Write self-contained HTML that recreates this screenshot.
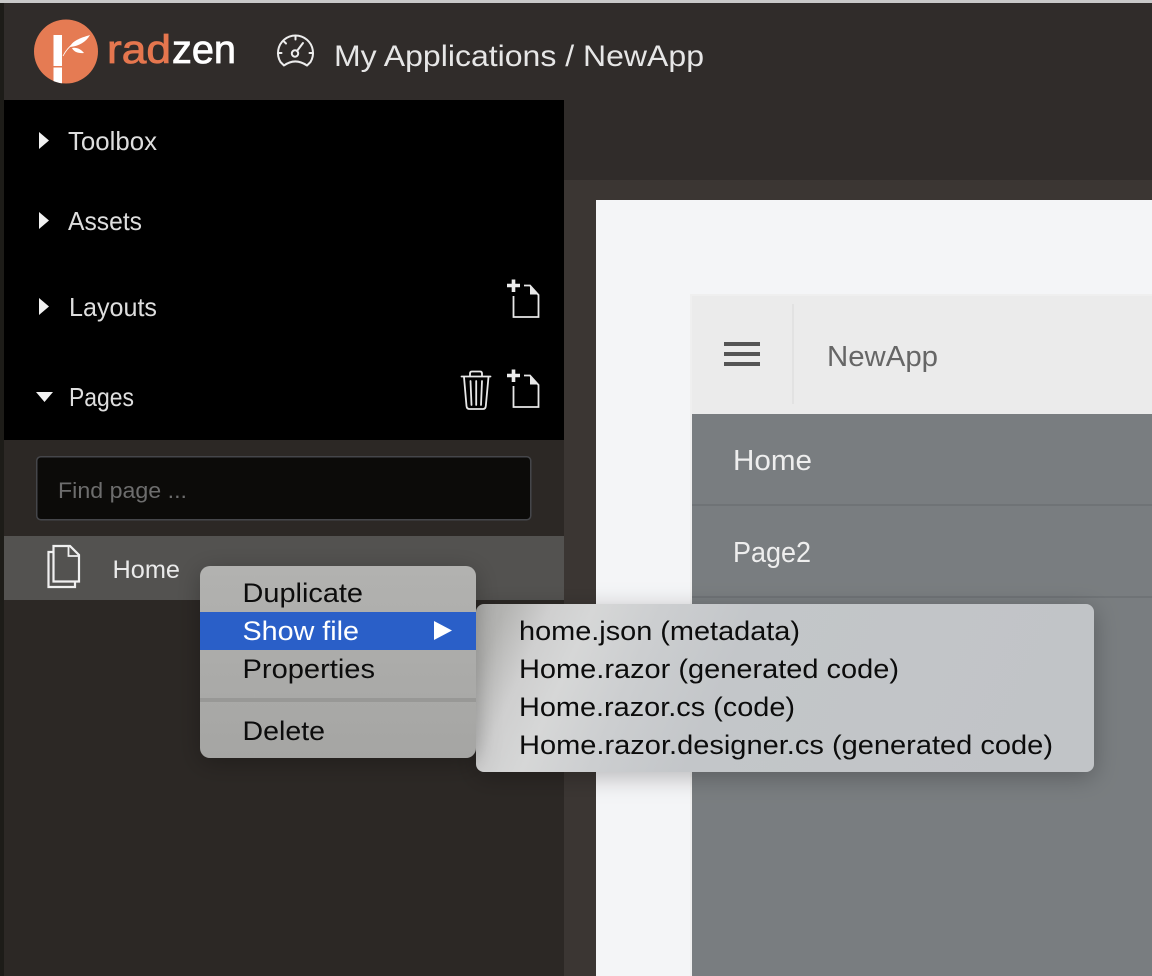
<!DOCTYPE html>
<html lang="en">
<head>
<meta charset="utf-8">
<title>Radzen</title>
<style>
html,body{margin:0;padding:0;background:#302c2a;width:1152px;height:976px;overflow:hidden}
svg{display:block}
text{font-family:"Liberation Sans",sans-serif;white-space:pre}
</style>
</head>
<body>
<svg xmlns="http://www.w3.org/2000/svg" width="1152" height="976" viewBox="0 0 1152 976">
<defs>
<filter id="sh" x="-20%" y="-30%" width="140%" height="170%">
<feDropShadow dx="0" dy="5" stdDeviation="12" flood-color="#000" flood-opacity=".26"/>
</filter>
<linearGradient id="m2" x1="0" y1="0" x2="1" y2="0.12">
<stop offset="0" stop-color="#acacaa"/><stop offset=".05" stop-color="#b4b4b2"/><stop offset=".12" stop-color="#cfcfcf"/><stop offset=".19" stop-color="#d6d7d7"/><stop offset=".3" stop-color="#ccced0"/><stop offset=".45" stop-color="#c3c6c9"/><stop offset="1" stop-color="#c1c4c7"/>
</linearGradient>
<linearGradient id="m1t" x1="0" y1="0" x2="0" y2="1">
<stop offset="0" stop-color="#b2b2b0"/><stop offset="1" stop-color="#a5a5a3"/>
</linearGradient>
<clipPath id="logo"><circle cx="66" cy="51.500" r="32"/></clipPath>
</defs>

<!-- shell -->
<rect width="1152" height="976" fill="#302c2a"/>
<rect width="1152" height="3" fill="#c9c9c9"/>
<rect y="3" width="4" height="973" fill="#1d1c18"/>
<rect x="564" y="180" width="588" height="796" fill="#3b3633"/>
<rect x="596" y="200" width="556" height="776" fill="#f4f5f7"/>

<!-- app preview -->
<rect x="690" y="294" width="462" height="682" fill="#efefef"/>
<rect x="692" y="296" width="460" height="118" fill="#ebebeb"/>
<rect x="792" y="304" width="2" height="100" fill="#e2e2e2"/>
<rect x="724" y="342" width="36" height="4" fill="#555"/>
<rect x="724" y="352" width="36" height="4" fill="#555"/>
<rect x="724" y="362" width="36" height="4" fill="#555"/>
<text x="827" y="366" font-size="29" fill="#666" textLength="111" lengthAdjust="spacingAndGlyphs">NewApp</text>
<rect x="692" y="414" width="460" height="562" fill="#797d80"/>
<rect x="692" y="504" width="460" height="2" fill="#6f7376"/>
<rect x="692" y="596" width="460" height="2" fill="#6f7376"/>
<text x="733" y="470" font-size="29" fill="#eee" textLength="79" lengthAdjust="spacingAndGlyphs">Home</text>
<text x="733" y="562" font-size="29" fill="#eee" textLength="78" lengthAdjust="spacingAndGlyphs">Page2</text>

<!-- header -->
<circle cx="66" cy="51.500" r="32" fill="#e57b53"/>
<g clip-path="url(#logo)" fill="#fff">
<rect x="53.500" y="35" width="8.500" height="31"/>
<rect x="53.500" y="67.500" width="8.500" height="18"/>
</g>
<path d="M63 56 C66 50 70 46 74 43" stroke="#fff" stroke-width=".8" fill="none"/>
<path d="M70 47 C72 41 80 38 90 35 C86 42 79 46 70 47Z" fill="#fff"/>
<path d="M72 48 C76 47 81 49 84 53 C78 53.500 74 52 72 48Z" fill="#fff"/>
<text x="107" y="63" font-size="40" fill="#e5764e" stroke="#e5764e" stroke-width=".8" textLength="64" lengthAdjust="spacingAndGlyphs">rad</text>
<text x="172" y="63" font-size="40" fill="#fff" stroke="#fff" stroke-width=".8" textLength="64" lengthAdjust="spacingAndGlyphs">zen</text>

<g fill="none" stroke="#ededed" stroke-width="2" stroke-linecap="round" stroke-linejoin="round">
<path d="M284 65.500 L280.500 62 A17.500 17.500 0 1 1 310.500 62 L307 65.500 C299 60 291.500 60 284 65.500Z"/>
<circle cx="295" cy="53.500" r="3.200"/>
<path d="M297 51 L303 43"/>
<path d="M295.500 36.500 V39.500 M284 41.500 L286 43.500 M278.500 53 H281.500 M309.500 53 H312.500"/>
</g>
<text x="334" y="66" font-size="30" fill="#e6e6e6" textLength="370" lengthAdjust="spacingAndGlyphs">My Applications / NewApp</text>

<!-- sidebar -->
<rect x="4" y="440" width="560" height="536" fill="#2c2825"/>
<rect x="4" y="100" width="560" height="340" fill="#000"/>

<path d="M39 132 L49 140.500 L39 149Z" fill="#f2f2f2"/>
<path d="M39 212 L49 220.500 L39 229Z" fill="#f2f2f2"/>
<path d="M39 298 L49 306.500 L39 315Z" fill="#f2f2f2"/>
<path d="M36 392 H53 L44.500 402Z" fill="#f2f2f2"/>
<text x="68" y="150" font-size="26" fill="#dedede" textLength="89" lengthAdjust="spacingAndGlyphs">Toolbox</text>
<text x="68" y="230" font-size="26" fill="#dedede" textLength="74" lengthAdjust="spacingAndGlyphs">Assets</text>
<text x="69" y="316" font-size="26" fill="#dedede" textLength="88" lengthAdjust="spacingAndGlyphs">Layouts</text>
<text x="69" y="406" font-size="26" fill="#dedede" textLength="65" lengthAdjust="spacingAndGlyphs">Pages</text>

<!-- add-page icons -->
<g>
<path d="M507 285.500 H520 M513.500 279.500 V292" stroke="#eee" stroke-width="3.600" fill="none"/>
<path d="M513.500 296 V317 H538.500 V295 L530 285.500 H524" stroke="#e8e8e8" stroke-width="1.800" fill="none"/>
<path d="M530 286 L538 294.500 H530Z" fill="#e8e8e8"/>
</g>
<g>
<path d="M507 375.500 H520 M513.500 369.500 V382" stroke="#eee" stroke-width="3.600" fill="none"/>
<path d="M513.500 386 V407 H538.500 V385 L530 375.500 H524" stroke="#e8e8e8" stroke-width="1.800" fill="none"/>
<path d="M530 376 L538 384.500 H530Z" fill="#e8e8e8"/>
</g>
<!-- trash -->
<g fill="none" stroke="#e8e8e8" stroke-width="1.800" stroke-linecap="round" stroke-linejoin="round">
<path d="M461.500 376.500 H490.500"/>
<path d="M470 376 V373.500 Q470 371.500 472 371.500 H480 Q482 371.500 482 373.500 V376"/>
<path d="M464 377 L466.500 406 Q466.800 409 469.500 409 H483 Q485.500 409 485.800 406 L488.500 377"/>
<path d="M470.500 381 L471.500 405 M476.200 381 V405 M482 381 L481 405"/>
</g>

<!-- search -->
<rect x="36.750" y="456.750" width="494" height="63" rx="4" fill="#0c0b09" stroke="#45464a" stroke-width="1.500"/>
<text x="58" y="498" font-size="22" fill="#6d6d6d" textLength="129" lengthAdjust="spacingAndGlyphs">Find page ...</text>

<!-- row -->
<rect x="4" y="536" width="560" height="64" fill="#535250"/>
<g fill="none" stroke="#f0f0f0" stroke-width="2.200">
<path d="M53 552 H48.500 V587 H75 V582"/>
<path d="M53.500 546 H70 L79 555 V581.500 H53.500Z"/>
<path d="M68.500 546 V556 H79" stroke-width="1.800"/>
</g>
<text x="112.500" y="578" font-size="25" fill="#eaeaea" textLength="67.500" lengthAdjust="spacingAndGlyphs">Home</text>

<!-- submenu -->
<rect x="476" y="604" width="618" height="168" rx="8" fill="url(#m2)" filter="url(#sh)"/>
<g font-size="27" fill="#0c0c0c">
<text x="519" y="640" textLength="281" lengthAdjust="spacingAndGlyphs">home.json (metadata)</text>
<text x="519" y="678" textLength="380" lengthAdjust="spacingAndGlyphs">Home.razor (generated code)</text>
<text x="519" y="716" textLength="276" lengthAdjust="spacingAndGlyphs">Home.razor.cs (code)</text>
<text x="519" y="754" textLength="534" lengthAdjust="spacingAndGlyphs">Home.razor.designer.cs (generated code)</text>
</g>

<!-- context menu -->
<rect x="200" y="566" width="276" height="192" rx="10" fill="url(#m1t)" filter="url(#sh)"/>
<rect x="200" y="612" width="276" height="38" fill="#2a5fc8"/>
<rect x="200" y="698" width="276" height="4" fill="#989896"/>
<g font-size="27" fill="#0c0c0c">
<text x="242.500" y="602" textLength="120.500" lengthAdjust="spacingAndGlyphs">Duplicate</text>
<text x="242.500" y="640" fill="#fff" textLength="116.500" lengthAdjust="spacingAndGlyphs">Show file</text>
<text x="242.500" y="678" textLength="132.500" lengthAdjust="spacingAndGlyphs">Properties</text>
<text x="242.500" y="740" textLength="82.500" lengthAdjust="spacingAndGlyphs">Delete</text>
</g>
<path d="M434 621 L452 630.500 L434 640Z" fill="#fff"/>
</svg>
</body>
</html>
